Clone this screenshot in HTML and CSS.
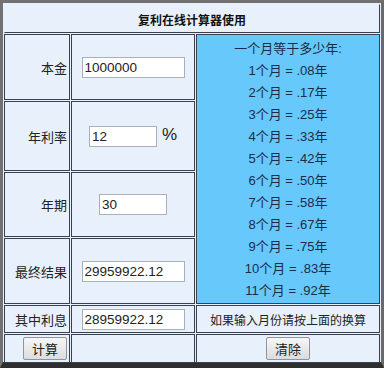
FILE: index.html
```html
<!DOCTYPE html>
<html>
<head>
<meta charset="utf-8">
<link rel="stylesheet" href="styles.css">
</head>
<body>
<div class="frame">
  <div class="calc">
    <div class="cell title">复利在线计算器使用</div>

    <div class="cell label r2">本金</div>
    <div class="cell field r2"><input class="inp wide" value="1000000"></div>
    <div class="cell info">
      <div>一个月等于多少年:</div>
      <div>1个月 = .08年</div>
      <div>2个月 = .17年</div>
      <div>3个月 = .25年</div>
      <div>4个月 = .33年</div>
      <div>5个月 = .42年</div>
      <div>6个月 = .50年</div>
      <div>7个月 = .58年</div>
      <div>8个月 = .67年</div>
      <div>9个月 = .75年</div>
      <div>10个月 = .83年</div>
      <div>11个月 = .92年</div>
    </div>

    <div class="cell label">年利率</div>
    <div class="cell field"><input class="inp narrow" value="12"><span class="pct">%</span></div>

    <div class="cell label">年期</div>
    <div class="cell field"><input class="inp narrow" value="30"></div>

    <div class="cell label">最终结果</div>
    <div class="cell field"><input class="inp wide" value="29959922.12"></div>

    <div class="cell label">其中利息</div>
    <div class="cell field"><input class="inp wide" value="28959922.12"></div>
    <div class="cell note">如果输入月份请按上面的换算</div>

    <div class="cell label"><button class="btn">计算</button></div>
    <div class="cell field"></div>
    <div class="cell center"><button class="btn">清除</button></div>
  </div>
</div>
</body>
</html>
```

FILE: styles.css
```css
* { box-sizing: border-box; }
html, body {
  margin: 0;
  padding: 0;
  background: #6a6a6a;
}
body {
  width: 384px;
  height: 368px;
  overflow: hidden;
  font-family: "Liberation Sans", "Noto Sans CJK SC", sans-serif;
  color: #222;
}
.frame {
  width: 384px;
  height: 368px;
  border-left: 3px solid #717171;
  border-top: 3px solid #717171;
  border-right: 3px solid #6a6a6a;
  border-bottom: 6px solid #2e2e2e;
}
.calc {
  display: grid;
  grid-template-columns: 66px 124px 184px;
  grid-template-rows: 29px 66px 70px 65px 66px 28px 29px;
  gap: 1px;
  padding: 1px;
  width: 378px;
  height: 359px;
  background: #e8f1fb;
}
.cell {
  border: 1px solid #38424e;
  background: #e8f1fb;
  display: flex;
  align-items: center;
  font-size: 13px;
}
.title {
  grid-column: 1 / 4;
  justify-content: center;
  font-weight: bold;
  font-size: 12px;
  color: #111;
  border-top-color: #e8f1fb;
  border-left-color: #e8f1fb;
  padding-top: 1px;
}
.label {
  justify-content: flex-end;
  padding-right: 2px;
}
.field {
  justify-content: center;
  gap: 5px;
}
.info {
  grid-column: 3;
  grid-row: 2 / 6;
  background: #66c8fb;
  flex-direction: column;
  justify-content: center;
  align-items: center;
  line-height: 22px;
  color: #1c2c48;
  padding-top: 1px;
}
.note {
  justify-content: center;
  font-size: 12px;
  color: #222;
}
.center {
  justify-content: center;
}
.inp {
  height: 21px;
  border: 1px solid #a9b0b8;
  background: #fff;
  font-family: "Liberation Sans", sans-serif;
  font-size: 13.5px;
  color: #222;
  padding: 0 2px;
  margin: 0;
  outline: none;
}
.wide { width: 103px; }
.narrow { width: 68px; }
.pct {
  font-size: 17px;
  color: #222;
  margin-top: -2px;
}
.btn {
  width: 44px;
  height: 23px;
  border: 1px solid #8e959c;
  border-radius: 2px;
  background: linear-gradient(#f6f6f6, #dcdcdc);
  font-family: "Noto Sans CJK SC", sans-serif;
  font-size: 13px;
  color: #222;
  padding: 0;
  margin: 0;
}
```
